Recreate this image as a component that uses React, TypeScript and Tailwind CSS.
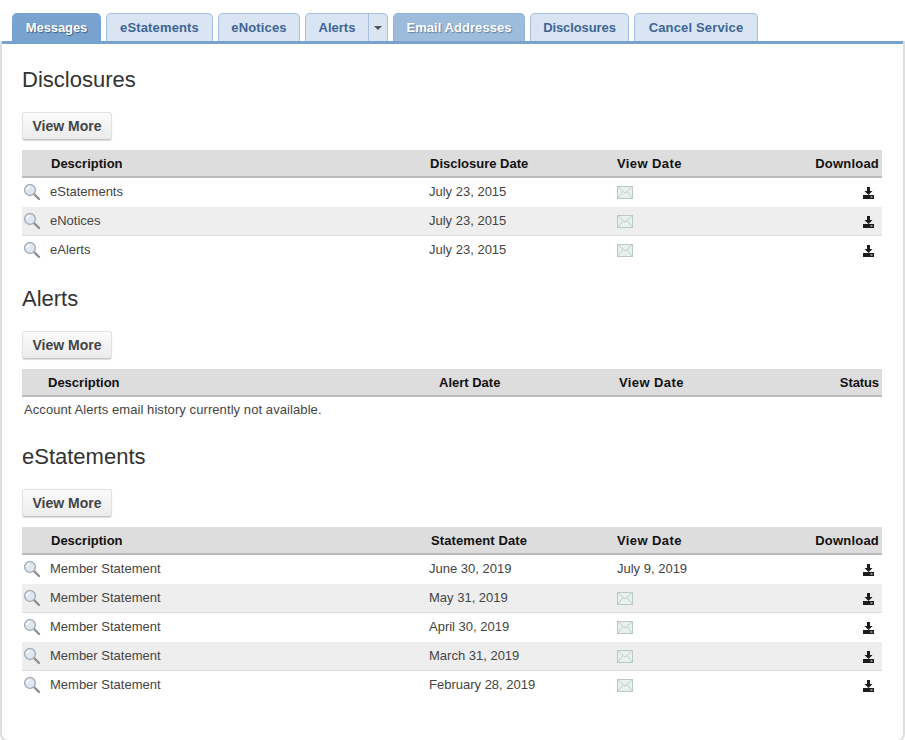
import React from "react";

const font = "font-['Liberation_Sans',Arial,sans-serif]";

function Mag() {
  return (
    <svg width="18" height="18" viewBox="0 0 18 18" className="block">
      <line x1="10.5" y1="10.5" x2="16" y2="16" stroke="#8f8f8f" strokeWidth="2.4" strokeLinecap="round" />
      <circle cx="7" cy="7" r="5.4" fill="#dfe8f2" stroke="#a9b0b8" strokeWidth="1.5" />
      <path d="M3.8 7a3.2 3.2 0 0 1 3.2-3.2" fill="none" stroke="#ffffff" strokeWidth="1.3" />
    </svg>
  );
}

function Mail() {
  return (
    <svg width="16" height="13" viewBox="0 0 16 13" className="block">
      <rect x="0.5" y="0.5" width="15" height="12" fill="#eaf0ee" stroke="#b9c9c4" />
      <path d="M1 1l7 6 7-6M1 12l5-6.5M15 12l-5-6.5" fill="none" stroke="#c3d0cc" />
    </svg>
  );
}

function Dl() {
  return (
    <svg width="11" height="12" viewBox="0 0 11 12" className="block">
      <path d="M4 0h3v4h2.5L5.5 8 1.5 4H4z" fill="#1c1c1c" />
      <path d="M0 8h11v4H0z" fill="#1c1c1c" />
      <rect x="7.5" y="9.5" width="2" height="1" fill="#ffffff" />
    </svg>
  );
}

function Tab({ label, active, mid, w, track }: { label: string; active?: boolean; mid?: boolean; w: string; track: string }) {
  const c = active
    ? "bg-[#78a3d0] border-[#78a3d0] text-white [text-shadow:1px_1px_1px_#3f5f85]"
    : mid
    ? "bg-[#9dbcdc] border-[#8fb3d8] text-white [text-shadow:1px_1px_1px_#5f7fa5]"
    : "bg-[#d9e5f2] border-[#a5c0de] text-[#3f6496]";
  return (
    <div className={`${w} h-[28px] border border-b-0 rounded-t-[5px] flex items-center justify-center text-[13px] font-bold ${track} ${c}`}>
      {label}
    </div>
  );
}

function Table({ head, rows }: { head: React.ReactNode; rows: { d: string; date: string; view?: string }[] }) {
  return (
    <div>
      {head}
      {rows.map((r, i) => (
        <div
          key={i}
          className={`grid grid-cols-[28px_379px_188px_1fr_20px] items-center h-[29px] border-b text-[13px] text-[#444] ${
            i % 2 === 1 ? "bg-[#eeeeee] border-[#dddddd]" : "border-transparent"
          }`}
        >
          <div className="pl-[1px] pb-[1px]"><Mag /></div>
          <div className="pb-[1px]">{r.d}</div>
          <div className="pb-[1px]">{r.date}</div>
          <div>{r.view ? <span className="block pb-[1px]">{r.view}</span> : <div className="pt-[1px]"><Mail /></div>}</div>
          <div className="pt-[2px] pl-[1px]"><Dl /></div>
        </div>
      ))}
    </div>
  );
}

function DocHead({ date, dateCls }: { date: string; dateCls?: string }) {
  return (
    <div className="grid grid-cols-[29px_379px_187px_1fr_auto] items-center h-[28px] pt-[2px] bg-[#dddddd] border-b-2 border-[#bbbbbb] text-[13px] font-bold text-[#111] pr-[3px]">
      <div />
      <div>Description</div>
      <div className={dateCls}>{date}</div>
      <div className="tracking-[0.4px]">View Date</div>
      <div className="tracking-[0.2px]">Download</div>
    </div>
  );
}

function ViewMore() {
  return (
    <div className="w-[90px] h-[28px] flex items-center justify-center rounded-[3px] border border-[#e2e2e2] border-b-[#c4c4c4] bg-gradient-to-b from-[#fbfbfb] to-[#ececec] text-[14px] font-bold text-[#444] shadow-[0_1px_1px_#ddd]">
      View More
    </div>
  );
}

function H({ children }: { children: React.ReactNode }) {
  return <h2 className="text-[22px] leading-[26px] text-[#333]">{children}</h2>;
}

export default function App() {
  return (
    <div className={`${font} w-[905px] h-[740px] bg-white overflow-hidden`}>
      <div className="flex gap-[5px] pl-[12px] pt-[13px] h-[41px] bg-white">
        <Tab label="Messages" active w="w-[89px]" track="tracking-[-0.1px]" />
        <Tab label="eStatements" w="w-[107px]" track="tracking-[0.15px]" />
        <Tab label="eNotices" w="w-[82px]" track="tracking-[0.15px]" />
        <div className="flex w-[83px] h-[28px] border border-b-0 border-[#a5c0de] rounded-t-[5px] bg-[#d9e5f2] text-[13px] font-bold text-[#3f6496]">
          <div className="w-[63px] flex items-center justify-center border-r border-[#a5c0de]">Alerts</div>
          <div className="flex-1 flex items-center justify-center">
            <div className="w-0 h-0 border-x-[4px] border-x-transparent border-t-[4px] border-t-[#555]" />
          </div>
        </div>
        <Tab label="Email Addresses" mid w="w-[132px]" track="tracking-[0.05px]" />
        <Tab label="Disclosures" w="w-[99px]" track="tracking-[-0.1px]" />
        <Tab label="Cancel Service" w="w-[124px]" track="tracking-[0.15px]" />
      </div>
      <div className="h-[701px] border-x-2 border-b-2 border-[#dedede] rounded-b-[8px]">
        <div className="h-[3px] bg-[#78a3d0]" />
        <div className="pl-[20px] pr-[21px] pt-[23px]">
          <H>Disclosures</H>
          <div className="mt-[19px] mb-[10px]"><ViewMore /></div>
          <Table
            head={<DocHead date="Disclosure Date" />}
            rows={[
              { d: "eStatements", date: "July 23, 2015" },
              { d: "eNotices", date: "July 23, 2015" },
              { d: "eAlerts", date: "July 23, 2015" },
            ]}
          />
          <div className="mt-[21px]"><H>Alerts</H></div>
          <div className="mt-[19px] mb-[10px]"><ViewMore /></div>
          <div className="grid grid-cols-[26px_391px_180px_1fr_auto] items-center h-[28px] pt-[2px] bg-[#dddddd] border-b-2 border-[#bbbbbb] text-[13px] font-bold text-[#111] pr-[3px]">
            <div />
            <div>Description</div>
            <div>Alert Date</div>
            <div className="tracking-[0.4px]">View Date</div>
            <div className="tracking-[-0.1px]">Status</div>
          </div>
          <div className="h-[26px] pl-[2px] flex items-center text-[13px] tracking-[0.08px] text-[#444]">Account Alerts email history currently not available.</div>
          <div className="mt-[21px]"><H>eStatements</H></div>
          <div className="mt-[19px] mb-[10px]"><ViewMore /></div>
          <Table
            head={<DocHead date="Statement Date" dateCls="pl-[1px] tracking-[0.1px]" />}
            rows={[
              { d: "Member Statement", date: "June 30, 2019", view: "July 9, 2019" },
              { d: "Member Statement", date: "May 31, 2019" },
              { d: "Member Statement", date: "April 30, 2019" },
              { d: "Member Statement", date: "March 31, 2019" },
              { d: "Member Statement", date: "February 28, 2019" },
            ]}
          />
        </div>
      </div>
    </div>
  );
}
